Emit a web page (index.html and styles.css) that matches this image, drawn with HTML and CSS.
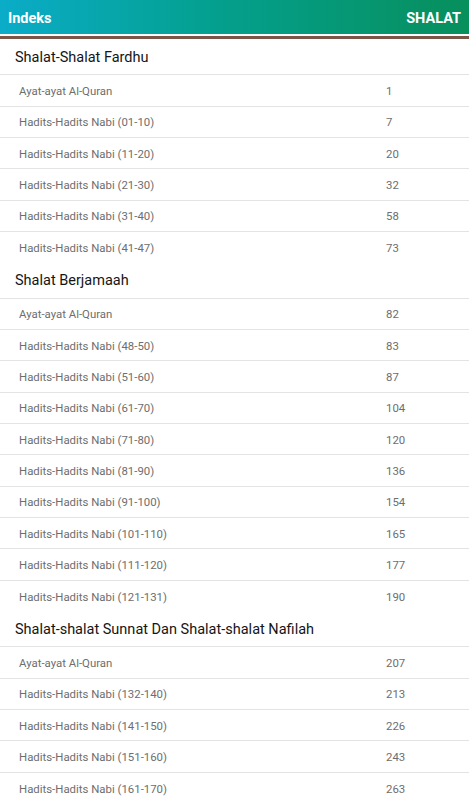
FILE: index.html
```html
<!DOCTYPE html>
<html lang="id">
<head>
<meta charset="utf-8">
<title>Indeks - Shalat</title>
<link rel="stylesheet" href="styles.css">
</head>
<body>
<header class="appbar">
  <span class="title">Indeks</span>
  <span class="book">SHALAT</span>
</header>
<div class="rule"></div>
<main class="index">
  <section class="group">
    <h2 class="group-title">Shalat-Shalat Fardhu</h2>
    <div class="row"><span class="label">Ayat-ayat Al-Quran</span><span class="page">1</span></div>
    <div class="row"><span class="label">Hadits-Hadits Nabi (01-10)</span><span class="page">7</span></div>
    <div class="row"><span class="label">Hadits-Hadits Nabi (11-20)</span><span class="page">20</span></div>
    <div class="row"><span class="label">Hadits-Hadits Nabi (21-30)</span><span class="page">32</span></div>
    <div class="row"><span class="label">Hadits-Hadits Nabi (31-40)</span><span class="page">58</span></div>
    <div class="row"><span class="label">Hadits-Hadits Nabi (41-47)</span><span class="page">73</span></div>
  </section>
  <section class="group">
    <h2 class="group-title">Shalat Berjamaah</h2>
    <div class="row"><span class="label">Ayat-ayat Al-Quran</span><span class="page">82</span></div>
    <div class="row"><span class="label">Hadits-Hadits Nabi (48-50)</span><span class="page">83</span></div>
    <div class="row"><span class="label">Hadits-Hadits Nabi (51-60)</span><span class="page">87</span></div>
    <div class="row"><span class="label">Hadits-Hadits Nabi (61-70)</span><span class="page">104</span></div>
    <div class="row"><span class="label">Hadits-Hadits Nabi (71-80)</span><span class="page">120</span></div>
    <div class="row"><span class="label">Hadits-Hadits Nabi (81-90)</span><span class="page">136</span></div>
    <div class="row"><span class="label">Hadits-Hadits Nabi (91-100)</span><span class="page">154</span></div>
    <div class="row"><span class="label">Hadits-Hadits Nabi (101-110)</span><span class="page">165</span></div>
    <div class="row"><span class="label">Hadits-Hadits Nabi (111-120)</span><span class="page">177</span></div>
    <div class="row"><span class="label">Hadits-Hadits Nabi (121-131)</span><span class="page">190</span></div>
  </section>
  <section class="group">
    <h2 class="group-title">Shalat-shalat Sunnat Dan Shalat-shalat Nafilah</h2>
    <div class="row"><span class="label">Ayat-ayat Al-Quran</span><span class="page">207</span></div>
    <div class="row"><span class="label">Hadits-Hadits Nabi (132-140)</span><span class="page">213</span></div>
    <div class="row"><span class="label">Hadits-Hadits Nabi (141-150)</span><span class="page">226</span></div>
    <div class="row"><span class="label">Hadits-Hadits Nabi (151-160)</span><span class="page">243</span></div>
    <div class="row"><span class="label">Hadits-Hadits Nabi (161-170)</span><span class="page">263</span></div>
  </section>
</main>
</body>
</html>
```

FILE: styles.css
```css
* { box-sizing: border-box; }
html, body { margin: 0; padding: 0; }
body {
  background: #ffffff;
  font-family: Roboto, "Noto Sans", "Liberation Sans", sans-serif;
  width: 469px;
  height: 800px;
  overflow: hidden;
}
.appbar {
  height: 34px;
  display: flex;
  align-items: center;
  justify-content: space-between;
  padding: 2px 8px 0 8px;
  background: linear-gradient(90deg, #0aacc8 0%, #04a08f 45%, #078f5c 100%);
  color: #ffffff;
  font-weight: 700;
  font-size: 14.5px;
}
.rule {
  margin-top: 2px;
  height: 3px;
  background: #7a5548;
}
.index { margin-top: 1px; }
.group-title {
  margin: 0;
  height: 35.33px;
  display: flex;
  align-items: center;
  padding-left: 15px;
  padding-top: 1px;
  font-size: 14.5px;
  font-weight: 400;
  color: #151515;
  border-bottom: 1px solid #e3e3e3;
}
.row {
  height: 31.33px;
  display: grid;
  grid-template-columns: 367px 1fr;
  align-items: center;
  padding-left: 19px;
  padding-top: 1px;
  border-bottom: 1px solid #e3e3e3;
  font-size: 11.4px;
  color: #6e6e6e;
}
.row:last-child { border-bottom: 0; }
.page { color: #6e6e6e; }
```
